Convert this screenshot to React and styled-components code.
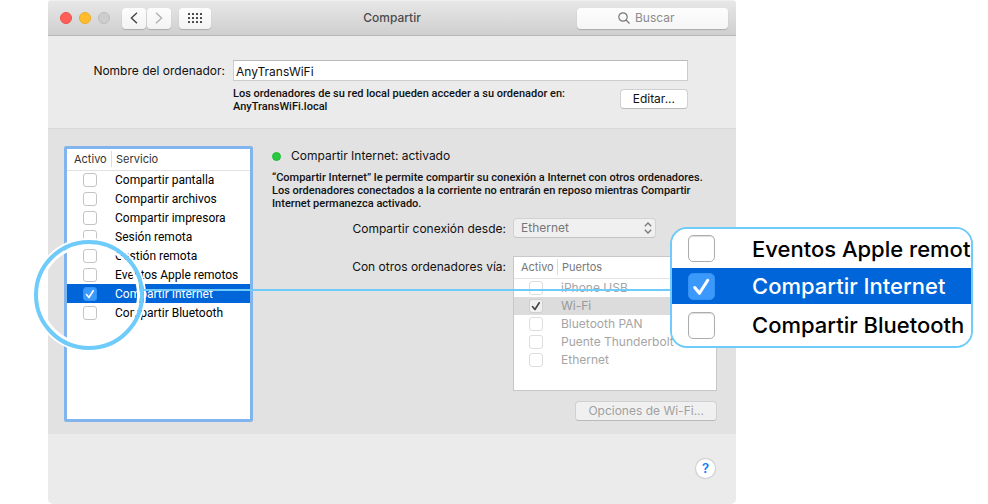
import React from "react";
import styled, { createGlobalStyle, css } from "styled-components";

const GlobalStyle = createGlobalStyle`
  *, *::before, *::after { box-sizing: border-box; }
  body {
    margin: 0;
    background: #fff;
    color: #111;
    font: 12px/16px Inter, Roboto, "Liberation Sans", sans-serif;
  }
  button, input, select { font: inherit; color: inherit; margin: 0; }
  h1, h2, p { margin: 0; font-weight: 400; }
`;

const Page = styled.div`
  position: relative;
  padding: 0 252px 0 48px;
  overflow: hidden;
`;

const Window = styled.main`
  display: flex;
  flex-direction: column;
  min-height: 100vh;
  background: #ebebeb;
  border-radius: 4px 4px 5px 5px;
  overflow: hidden;
`;

const TitleBar = styled.header`
  display: grid;
  grid-template-columns: 1fr auto 1fr;
  align-items: center;
  height: 36px;
  padding: 0 8px 0 12px;
  background: linear-gradient(#e7e7e7, #cfcfcf);
  border-top: 1px solid #f0f0f0;
  border-bottom: 1px solid #b8b8b8;
`;

const TitleControls = styled.div`
  display: flex;
  align-items: center;
`;

const Lights = styled.div`
  display: flex;
  gap: 7px;
  margin-right: 12px;
`;

const Light = styled.button`
  width: 12px;
  height: 12px;
  padding: 0;
  border: 1px solid ${(p) => p.$edge};
  border-radius: 50%;
  background: ${(p) => p.$fill};
`;

const ToolButton = styled.button`
  display: flex;
  align-items: center;
  justify-content: center;
  width: ${(p) => (p.$wide ? 32 : 24)}px;
  height: 21px;
  margin-right: ${(p) => (p.$wide ? 0 : 1)}px;
  margin-left: ${(p) => (p.$wide ? 7 : 0)}px;
  padding: 0;
  border: 0;
  border-radius: 4px;
  background: linear-gradient(#fdfdfd, #f3f3f3);
  box-shadow: 0 1px 1px #aaa;
  color: ${(p) => (p.disabled ? "#b0b0b0" : "#444")};
`;

const Title = styled.h1`
  color: #4b4b4b;
  font-size: 12px;
  line-height: 16px;
  font-weight: 500;
  padding-right: 4px;
`;

const Search = styled.label`
  display: flex;
  align-items: center;
  justify-content: center;
  justify-self: end;
  gap: 5px;
  width: 151px;
  height: 21px;
  padding-right: 8px;
  border-radius: 4px;
  background: linear-gradient(#fdfdfd, #f5f5f5);
  box-shadow: 0 1px 1px #aaa;
  color: #777;
`;

const SearchInput = styled.input`
  width: 44px;
  padding: 0;
  border: 0;
  outline: 0;
  background: none;
  &::placeholder { color: #8c8c8c; opacity: 1; }
`;

const NameSection = styled.section`
  display: grid;
  grid-template-columns: 177px 1fr auto;
  column-gap: 8px;
  padding: 24px 48px 15px 0;
  border-bottom: 1px solid #d9d9d9;
`;

const FieldLabel = styled.label`
  padding-top: 3px;
  text-align: right;
  white-space: nowrap;
`;

const NameInput = styled.input`
  grid-column: 2 / 4;
  width: 100%;
  height: 21px;
  padding: 2px 2px 0;
  border: 1px solid #ccc;
  border-top-color: #bbb;
  background: #fff;
`;

const Small = styled.p`
  font-family: Roboto, "Liberation Sans", sans-serif;
  font-size: 11px;
  line-height: 13px;
  font-weight: 500;
`;

const Hint = styled(Small)`
  grid-column: 2;
  padding-top: 6px;
`;

const PushButton = styled.button`
  height: 20px;
  padding: 0 12px;
  border: 1px solid #d0d0d0;
  border-bottom-color: #bababa;
  border-radius: 4px;
  background: #fff;
  line-height: 16px;
  white-space: nowrap;
  &:disabled { background: #f0f0f0; color: #a0a0a0; }
`;

const EditButton = styled(PushButton)`
  margin-top: 8px;
`;

const ShareSection = styled.section`
  display: grid;
  grid-template-columns: 189px 1fr;
  column-gap: 19px;
  height: 305px;
  padding: 17px 19px 12px 16px;
  background: #e2e2e2;
`;

const ServiceFrame = styled.div`
  border: 3px solid #82b5ed;
  border-radius: 2px;
  background: #fff;
`;

const Table = styled.table`
  width: 100%;
  border-collapse: collapse;
  table-layout: fixed;
  td, th { padding: 0; text-align: left; font-weight: 400; white-space: nowrap; }
`;

const HeadCell = styled.th`
  height: 21px;
  border-bottom: 1px solid #e2e2e2;
  font-size: 11px;
  line-height: 16px;
  color: ${(p) => (p.$muted ? "#777" : "#333")};
`;

const HeadText = styled.span`
  display: block;
  padding-left: ${(p) => (p.$first ? 7 : 4)}px;
  border-right: ${(p) => (p.$first ? "1px solid #dcdcdc" : "0")};
`;

const Row = styled.tr`
  height: ${(p) => (p.$muted ? 18 : 19)}px;
  line-height: 18px;
  color: ${(p) => (p.$muted ? "#a5a5a5" : "#000")};
  ${(p) => !p.$muted && css`font-family: Roboto, "Liberation Sans", sans-serif;`}
  ${(p) => p.$selected && css`
    background: ${p.$muted ? "#dcdcdc" : "#0065d9"};
    color: ${p.$muted ? "#999" : "#fff"};
  `}
`;

const BoxWrap = styled.span`
  display: grid;
  width: ${(p) => p.$size}px;
  height: ${(p) => p.$size}px;
  margin-left: ${(p) => p.$inset}px;
  > * { grid-area: 1 / 1; }
  svg { width: 100%; height: 100%; pointer-events: none; visibility: hidden; }
  input:checked + svg { visibility: visible; }
`;

const BoxInput = styled.input`
  appearance: none;
  width: 100%;
  height: 100%;
  border: 1px solid ${(p) => (p.$muted ? "#dedede" : p.$large ? "#adadad" : "#c4c4c4")};
  border-radius: ${(p) => (p.$large ? 5 : 3)}px;
  background: #fff;
  ${(p) => p.$large && css`box-shadow: inset 0 1px 1px #ddd;`}
  &:checked {
    ${(p) => p.$muted
      ? css`background: #f0f0f0; border-color: #cfcfcf;`
      : css`background: #3b99fc; border-color: #3390f5; box-shadow: none;`}
  }
`;

function CheckBox({ id, checked, muted, large, size, inset }) {
  return (
    <BoxWrap $size={size} $inset={inset}>
      <BoxInput type="checkbox" id={id} defaultChecked={checked} disabled={muted} $muted={muted} $large={large} />
      <svg viewBox="0 0 26 26" fill="none" stroke={muted ? "#444" : "#fff"} strokeWidth="3" strokeLinecap="round" strokeLinejoin="round" aria-hidden="true">
        <path d="M6.5 14 11 19.5 19 7" />
      </svg>
    </BoxWrap>
  );
}

const CellLabel = styled.label`
  display: block;
  padding-left: 3px;
`;

function CheckTable({ name, columns, firstWidth, rows, muted, inset }) {
  return (
    <Table>
      <colgroup>
        <col width={firstWidth} />
        <col />
      </colgroup>
      <thead>
        <tr>
          {columns.map((c, i) => (
            <HeadCell key={c} $muted={muted}><HeadText $first={i === 0}>{c}</HeadText></HeadCell>
          ))}
        </tr>
      </thead>
      <tbody>
        {rows.map((r) => (
          <Row key={r.text} $muted={muted} $selected={r.selected}>
            <td><CheckBox id={`${name}-${r.text}`} checked={r.selected} muted={muted} size={14} inset={inset} /></td>
            <td><CellLabel htmlFor={`${name}-${r.text}`}>{r.text}</CellLabel></td>
          </Row>
        ))}
      </tbody>
    </Table>
  );
}

const Details = styled.div`
  display: flex;
  flex-direction: column;
`;

const Status = styled.h2`
  display: flex;
  align-items: center;
  gap: 10px;
  margin-top: 2px;
  font-size: 12px;
  line-height: 16px;
`;

const StatusDot = styled.span`
  width: 9px;
  height: 9px;
  border-radius: 50%;
  background: #28c940;
  border: 1px solid #22bb38;
`;

const Explanation = styled(Small)`
  margin-top: 7px;
`;

const Form = styled.div`
  display: grid;
  grid-template-columns: 234px 1fr;
  column-gap: 7px;
  margin-top: 8px;
`;

const SelectWrap = styled.span`
  display: grid;
  align-items: center;
  width: 143px;
  height: 20px;
  margin-bottom: 18px;
  color: #777;
  > * { grid-area: 1 / 1; }
  svg { justify-self: end; margin-right: 4px; pointer-events: none; }
`;

const Select = styled.select`
  appearance: none;
  width: 100%;
  height: 20px;
  padding: 0 7px;
  border: 1px solid #d2d2d2;
  border-bottom-color: #c4c4c4;
  border-radius: 4px;
  background: #f0f0f0;
  opacity: 1;
`;

const PortFrame = styled.div`
  height: 135px;
  border: 1px solid #c8c8c8;
  background: #fff;
`;

const OptionsButton = styled(PushButton)`
  grid-column: 2;
  justify-self: end;
  margin-top: 10px;
`;

const Footer = styled.footer`
  display: flex;
  justify-content: flex-end;
  padding: 25px 21px;
`;

const HelpButton = styled.button`
  width: 19px;
  height: 19px;
  padding: 0;
  border: 0;
  border-radius: 50%;
  background: #fff;
  box-shadow: 0 0 1px 1px #ccc;
  color: #0a7aff;
  font-size: 13px;
  line-height: 19px;
  font-weight: 600;
`;

const Ring = styled.div`
  position: absolute;
  left: 34px;
  top: 240px;
  width: 110px;
  height: 110px;
  border: 4px solid #6fcbfa;
  border-radius: 50%;
  box-shadow: 0 0 0 2px #fff, inset 0 0 0 3px #fff;
  pointer-events: none;
`;

const Connector = styled.div`
  position: absolute;
  left: 143px;
  right: 316px;
  top: 289px;
  height: 2px;
  background: #6fcbfa;
`;

const Callout = styled.aside`
  position: absolute;
  right: 15px;
  top: 227px;
  width: 303px;
  border: 2px solid #6fcbfa;
  border-radius: 17px;
  background: #fff;
  overflow: hidden;
`;

const CalloutRow = styled.div`
  display: flex;
  align-items: center;
  gap: 37px;
  height: 39px;
  padding-left: 16px;
  font-size: 22px;
  line-height: 28px;
  font-weight: 500;
  white-space: nowrap;
  background: #fff;
  color: #000;
  &:last-child { height: 42px; }
  ${(p) => p.$selected && css`
    height: 36px;
    background: #0065d9;
    color: #fff;
  `}
`;

const services = [
  { text: "Compartir pantalla" },
  { text: "Compartir archivos" },
  { text: "Compartir impresora" },
  { text: "Sesión remota" },
  { text: "Gestión remota" },
  { text: "Eventos Apple remotos" },
  { text: "Compartir Internet", selected: true },
  { text: "Compartir Bluetooth" },
];

const ports = [
  { text: "iPhone USB" },
  { text: "Wi-Fi", selected: true },
  { text: "Bluetooth PAN" },
  { text: "Puente Thunderbolt" },
  { text: "Ethernet" },
];

const enlarged = [
  { text: "Eventos Apple remot" },
  { text: "Compartir Internet", selected: true },
  { text: "Compartir Bluetooth" },
];

const gridDots = [0, 4, 8, 12].flatMap((x) => [0, 4, 8].map((y) => [x, y]));

export default function App() {
  return (
    <Page>
      <GlobalStyle />
      <Window>
        <TitleBar>
          <TitleControls>
            <Lights>
              <Light aria-label="Cerrar" $fill="#ff5f57" $edge="#ee5049" />
              <Light aria-label="Minimizar" $fill="#ffbd2e" $edge="#efab22" />
              <Light aria-label="Ampliar" $fill="#cdcdcd" $edge="#bdbdbd" />
            </Lights>
            <ToolButton aria-label="Atrás">
              <svg width="8" height="12" viewBox="0 0 8 12" fill="none" stroke="currentColor" strokeWidth="1.4"><path d="M7 .8 1.4 6 7 11.2" /></svg>
            </ToolButton>
            <ToolButton aria-label="Adelante" disabled>
              <svg width="8" height="12" viewBox="0 0 8 12" fill="none" stroke="currentColor" strokeWidth="1.4"><path d="M1 .8 6.6 6 1 11.2" /></svg>
            </ToolButton>
            <ToolButton aria-label="Mostrar todo" $wide>
              <svg width="14" height="10" viewBox="0 0 14 10" fill="currentColor">
                {gridDots.map(([x, y]) => <rect key={`${x}-${y}`} x={x} y={y} width="2" height="2" rx=".5" />)}
              </svg>
            </ToolButton>
          </TitleControls>
          <Title>Compartir</Title>
          <Search>
            <svg width="12" height="12" viewBox="0 0 12 12" fill="none" stroke="currentColor" strokeWidth="1.2" aria-hidden="true">
              <circle cx="5" cy="5" r="4.2" /><path d="m8 8 3.5 3.5" />
            </svg>
            <SearchInput placeholder="Buscar" aria-label="Buscar" />
          </Search>
        </TitleBar>

        <NameSection>
          <FieldLabel htmlFor="computer-name">Nombre del ordenador:</FieldLabel>
          <NameInput id="computer-name" defaultValue="AnyTransWiFi" />
          <Hint>
            Los ordenadores de su red local pueden acceder a su ordenador en:
            <br />AnyTransWiFi.local
          </Hint>
          <EditButton>Editar...</EditButton>
        </NameSection>

        <ShareSection>
          <ServiceFrame>
            <CheckTable name="service" columns={["Activo", "Servicio"]} firstWidth="45" rows={services} inset={16} />
          </ServiceFrame>
          <Details>
            <Status><StatusDot />Compartir Internet: activado</Status>
            <Explanation>
              “Compartir Internet” le permite compartir su conexión a Internet con otros ordenadores.
              <br />Los ordenadores conectados a la corriente no entrarán en reposo mientras Compartir
              <br />Internet permanezca activado.
            </Explanation>
            <Form>
              <FieldLabel htmlFor="share-from">Compartir conexión desde:</FieldLabel>
              <SelectWrap>
                <Select id="share-from" disabled><option>Ethernet</option></Select>
                <svg width="8" height="12" viewBox="0 0 8 12" fill="none" stroke="currentColor" strokeWidth="1.3" aria-hidden="true">
                  <path d="M.8 4.2 4 1l3.2 3.2M.8 7.8 4 11l3.2-3.2" />
                </svg>
              </SelectWrap>
              <FieldLabel as="span">Con otros ordenadores vía:</FieldLabel>
              <PortFrame>
                <CheckTable name="port" columns={["Activo", "Puertos"]} firstWidth="44" rows={ports} muted inset={15} />
              </PortFrame>
              <OptionsButton disabled>Opciones de Wi-Fi...</OptionsButton>
            </Form>
          </Details>
        </ShareSection>

        <Footer><HelpButton aria-label="Ayuda">?</HelpButton></Footer>
      </Window>

      <Ring />
      <Connector />
      <Callout>
        {enlarged.map((r) => (
          <CalloutRow key={r.text} $selected={r.selected}>
            <CheckBox id={`enlarged-${r.text}`} checked={r.selected} large size={27} inset={0} />
            <label htmlFor={`enlarged-${r.text}`}>{r.text}</label>
          </CalloutRow>
        ))}
      </Callout>
    </Page>
  );
}
